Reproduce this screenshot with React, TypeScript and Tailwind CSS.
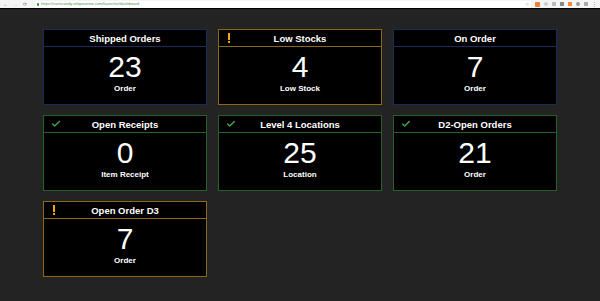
import { Check } from 'lucide-react'

type Status = 'none' | 'warn' | 'ok'

type Tile = {
  title: string
  value: number
  unit: string
  status: Status
}

const TILES: Tile[] = [
  { title: 'Shipped Orders', value: 23, unit: 'Order', status: 'none' },
  { title: 'Low Stocks', value: 4, unit: 'Low Stock', status: 'warn' },
  { title: 'On Order', value: 7, unit: 'Order', status: 'none' },
  { title: 'Open Receipts', value: 0, unit: 'Item Receipt', status: 'ok' },
  { title: 'Level 4 Locations', value: 25, unit: 'Location', status: 'ok' },
  { title: 'D2-Open Orders', value: 21, unit: 'Order', status: 'ok' },
  { title: 'Open Order D3', value: 7, unit: 'Order', status: 'warn' },
]

const BORDER: Record<Status, string> = {
  none: 'border-[#1a2d58]',
  warn: 'border-[#8a6816]',
  ok: 'border-[#28602a]',
}

function BrowserBar() {
  return (
    <div className="flex h-[9px] items-center border-b border-black bg-[#f4f4f4] px-[3px] text-[#777]">
      <div className="flex items-center gap-[5px] text-[5px] leading-none">
        <span>←</span>
        <span className="text-[#bbb]">→</span>
        <span>⟳</span>
      </div>
      <div className="ml-[8px] flex h-[7px] flex-1 items-center gap-[2px] rounded-[1px] bg-white px-[2px]">
        <span className="h-[3px] w-[2px] rounded-[1px] bg-[#2e8b2e]" />
        <span className="text-[4px] leading-none text-[#4a9a4a]">
          https://cartscandy.infoposeme.com/launcher/dashboard
        </span>
        <span className="ml-auto text-[5px] leading-none text-[#999]">☆</span>
      </div>
      <div className="ml-[4px] flex items-center gap-[4px]">
        <span className="h-[5px] w-[5px] rounded-[1px] bg-[#e8823a]" />
        <span className="h-[4px] w-[4px] rounded-full bg-[#ccc]" />
        <span className="h-[4px] w-[4px] bg-[#bbb]" />
        <span className="h-[4px] w-[4px] bg-[#888]" />
        <span className="h-[4px] w-[4px] bg-[#f08a3a]" />
        <span className="h-[4px] w-[4px] rounded-full bg-[#999]" />
        <span className="h-[4px] w-[4px] bg-[#aaa]" />
        <span className="text-[5px] leading-none">⋮</span>
      </div>
    </div>
  )
}

function TileCard({ tile }: { tile: Tile }) {
  const border = BORDER[tile.status]
  return (
    <div className={`flex h-[76px] flex-col border bg-black ${border}`}>
      <div className={`relative flex h-[17px] shrink-0 items-center justify-center border-b ${border}`}>
        {tile.status === 'warn' && (
          <span className="absolute left-[9px] top-[3px] h-[7px] w-[2px] bg-[#f2a60c]">
            <span className="absolute left-0 top-[8px] h-[2px] w-[2px] bg-[#f2a60c]" />
          </span>
        )}
        {tile.status === 'ok' && (
          <Check className="absolute left-[7px] top-[3px] h-[10px] w-[10px] text-[#3fa34a]" strokeWidth={3.5} />
        )}
        <span className="pt-[1px] text-[9.5px] font-bold leading-none text-white">{tile.title}</span>
      </div>
      <div className="flex flex-col items-center pt-[5px]">
        <span className="text-[30px] leading-[30px] text-white">{tile.value}</span>
        <span className="mt-[2px] text-[8px] font-bold leading-[10px] text-white">{tile.unit}</span>
      </div>
    </div>
  )
}

export default function App() {
  return (
    <div className="h-[301px] w-[600px] overflow-hidden bg-[#232323] font-['Liberation_Sans',Arial,sans-serif]">
      <BrowserBar />
      <div className="grid grid-cols-[164px_164px_164px] gap-x-[11px] gap-y-[10px] px-[43px] pt-[20px]">
        {TILES.map((tile) => (
          <TileCard key={tile.title} tile={tile} />
        ))}
      </div>
    </div>
  )
}
